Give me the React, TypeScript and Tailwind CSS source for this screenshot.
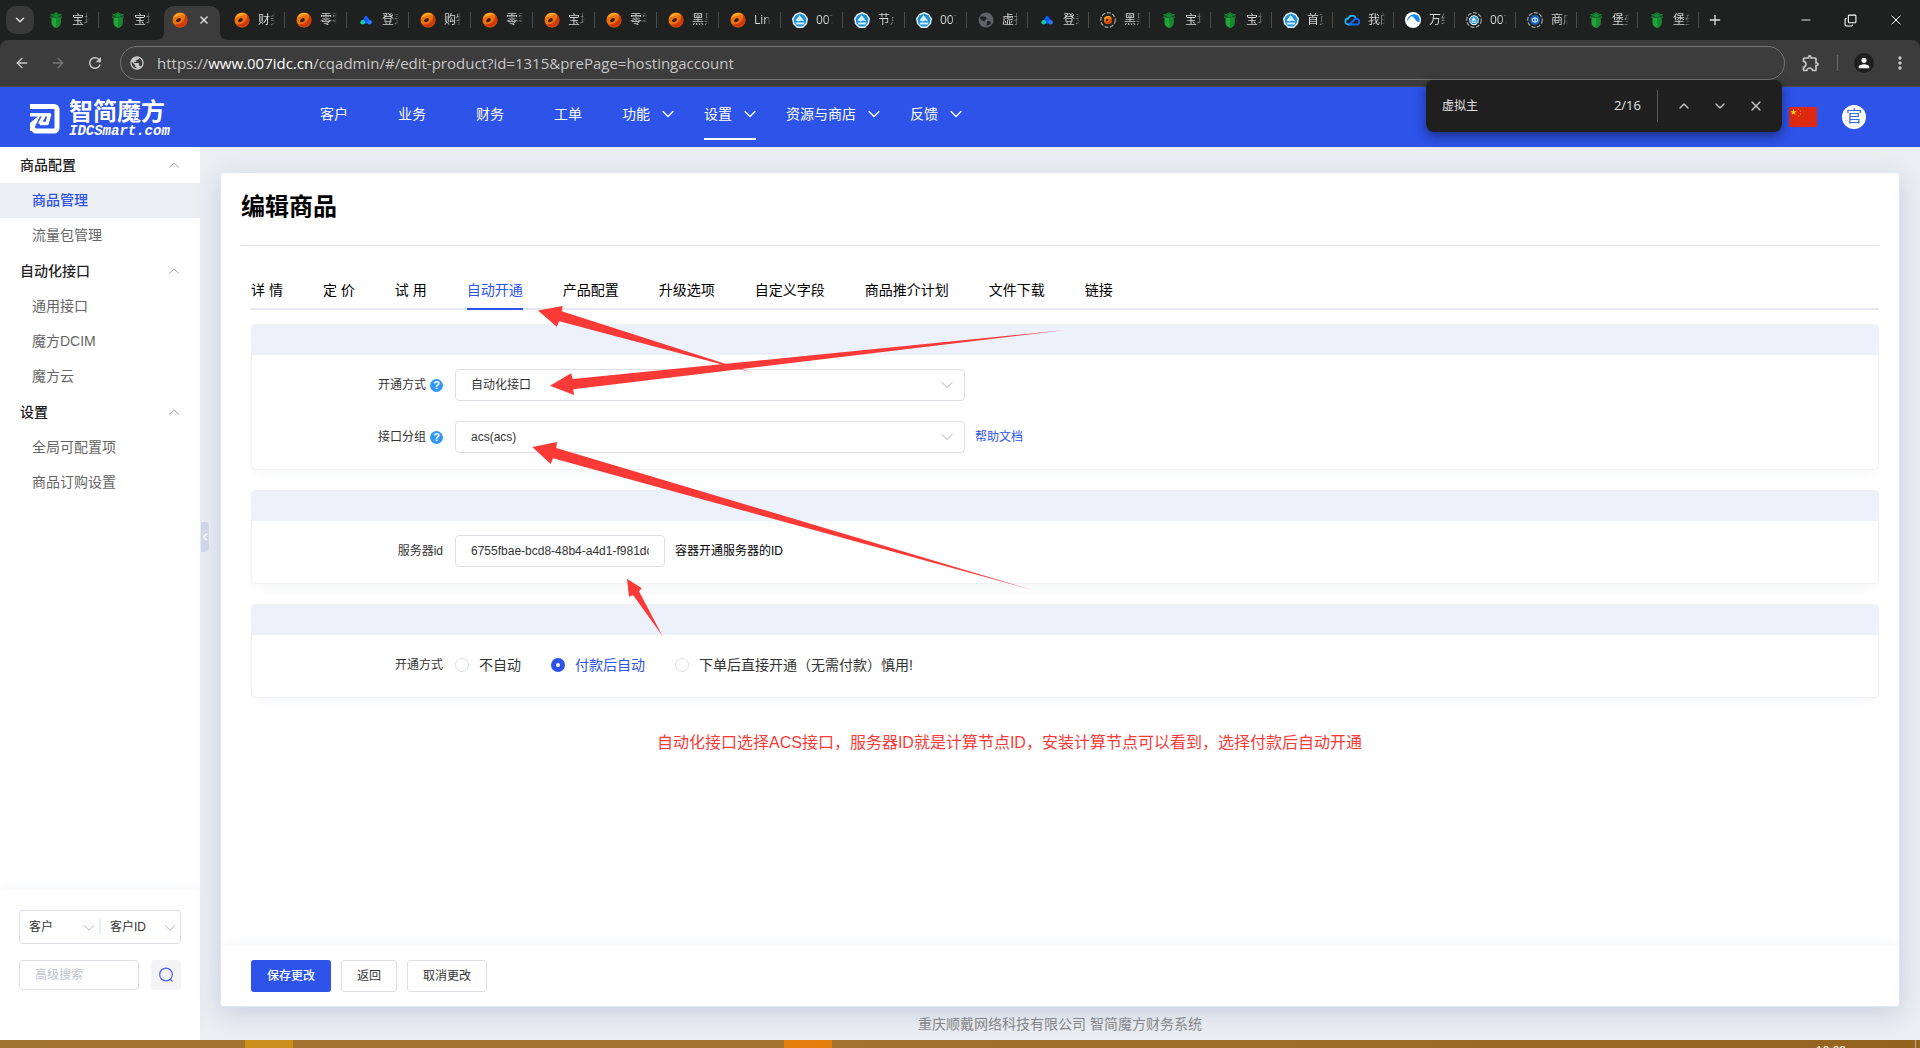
import { useState } from "react";
import type { ReactNode } from "react";
import { ArrowLeft, ArrowRight, ChevronDown, ChevronLeft, ChevronUp, Copy, Minus, Plus, X } from "lucide-react";
import { MdMoreVert, MdOutlineExtension, MdPerson, MdPublic, MdRefresh } from "react-icons/md";

type IconName = "bt" | "orange" | "peaks" | "hex" | "globe" | "ringOrange" | "cloud" | "wave" | "ringHex" | "ringBlue";

const browserTabs: { icon: IconName; label: string; active?: boolean }[] = [
  { icon: "bt", label: "宝塔" },
  { icon: "bt", label: "宝塔" },
  { icon: "orange", label: "", active: true },
  { icon: "orange", label: "财务" },
  { icon: "orange", label: "零零" },
  { icon: "peaks", label: "登录" },
  { icon: "orange", label: "购物" },
  { icon: "orange", label: "零零" },
  { icon: "orange", label: "宝塔" },
  { icon: "orange", label: "零零" },
  { icon: "orange", label: "黑黑" },
  { icon: "orange", label: "Linux" },
  { icon: "hex", label: "007" },
  { icon: "hex", label: "节点" },
  { icon: "hex", label: "007" },
  { icon: "globe", label: "虚拟" },
  { icon: "peaks", label: "登录" },
  { icon: "ringOrange", label: "黑黑" },
  { icon: "bt", label: "宝塔" },
  { icon: "bt", label: "宝塔" },
  { icon: "hex", label: "首页" },
  { icon: "cloud", label: "我的" },
  { icon: "wave", label: "万维" },
  { icon: "ringHex", label: "007" },
  { icon: "ringBlue", label: "商店" },
  { icon: "bt", label: "堡垒" },
  { icon: "bt", label: "堡垒" },
];

const navItems = [
  { label: "客户" },
  { label: "业务" },
  { label: "财务" },
  { label: "工单" },
  { label: "功能", menu: true },
  { label: "设置", menu: true, active: true },
  { label: "资源与商店", menu: true },
  { label: "反馈", menu: true },
];

const sideGroups = [
  { title: "商品配置", items: ["商品管理", "流量包管理"] },
  { title: "自动化接口", items: ["通用接口", "魔方DCIM", "魔方云"] },
  { title: "设置", items: ["全局可配置项", "商品订购设置"] },
];

const productTabs = [
  "详 情",
  "定 价",
  "试 用",
  "自动开通",
  "产品配置",
  "升级选项",
  "自定义字段",
  "商品推介计划",
  "文件下载",
  "链接",
];

const openModes = ["不自动", "付款后自动", "下单后直接开通（无需付款）慎用!"];

function OrangeMark() {
  return (
    <>
      <ellipse cx="8" cy="8" rx="7.5" ry="7.5" fill="#ee720c" />
      <path d="M2 12.500C5 16 12 16 14.600 11.500C16 8 15 4 13 2.500C14 8 9 13 2 12.500z" fill="#d03a0b" />
      <path d="M1 6C2.500 1 9 -0.500 13 2.500C9.500 2.500 3 5 1 6z" fill="#fda326" />
      <ellipse cx="6.500" cy="8.200" rx="2.600" ry="1.700" fill="#3a1a10" transform="rotate(-35 6.500 8.200)" />
    </>
  );
}

function HexMark() {
  return (
    <>
      <path d="M8 0L13 2L16 6.500L15 12L11 16H5L1 12L0 6.500L3 2z" fill="#e9f6fd" />
      <path d="M8 1.500L12.500 3.500L14.500 7L13.500 11.500L10.500 14.500H5.500L2.500 11.500L1.500 7L3.500 3.500z" fill="#1b8fd8" />
      <path d="M3.500 8.500L7.500 3L9.500 5.500L12.500 9.500L9 8.500L7 9.500z" fill="#d7effb" />
      <path d="M3.500 10.500H12.500L11.500 12.500H4.500z" fill="#d7effb" />
    </>
  );
}

function Favicon({ name }: { name: IconName }) {
  const art: Record<IconName, ReactNode> = {
    bt: (
      <>
        <path d="M3.500 6H12.500V11C12.500 13.500 10.500 15 8 16C5.500 15 3.500 13.500 3.500 11z" fill="#20a53a" />
        <path d="M8 6H12.500V11C12.500 13.500 10.500 15 8 16z" fill="#178a30" />
        <path d="M8 0V5M2.500 2.500L8 4L13.500 2.500M2 5.200H14M5.500 1.200L8 3L10.500 1.200" stroke="#168a31" strokeWidth="1.300" fill="none" />
      </>
    ),
    orange: <OrangeMark />,
    peaks: (
      <>
        <path d="M6 8.500L8 5L10.500 8.500L8 10.500z" fill="#0f5bff" stroke="#0f5bff" strokeWidth="2.500" strokeLinejoin="round" />
        <circle cx="4.700" cy="10.200" r="2.300" fill="#12cfa2" />
        <circle cx="11.500" cy="10.200" r="2.300" fill="#2a7bff" />
      </>
    ),
    hex: <HexMark />,
    globe: (
      <>
        <circle cx="8" cy="8" r="7.500" fill="#5f6368" />
        <path d="M3 4C5 5 8 4 8.500 6C9 8 6 7.500 6.500 9.500C5 9 2.500 8 2 6zM9 9.500C11 8.500 13 9.500 13 11C12 13 10 13.500 8.500 13.500C8 12 10 11 9 9.500z" fill="#202124" />
      </>
    ),
    ringOrange: (
      <>
        <circle cx="8" cy="8" r="7.300" fill="none" stroke="#a3a3a3" strokeWidth="1.200" strokeDasharray="4 1.500" />
        <svg x="3.500" y="3.500" width="9" height="9" viewBox="0 0 16 16">
          <OrangeMark />
        </svg>
      </>
    ),
    cloud: (
      <>
        <path d="M6 12.500H4.500A3 3 0 0 1 4.300 6.500A4 4 0 0 1 11.800 6" fill="none" stroke="#13b7f0" strokeWidth="1.800" />
        <path d="M5.500 12.500L10.500 7.500A2.900 2.900 0 1 1 12 12.500H5.500" fill="none" stroke="#0a6cff" strokeWidth="1.800" />
      </>
    ),
    wave: (
      <>
        <circle cx="8" cy="8" r="8" fill="#fff" />
        <path d="M2 9C3.500 8.500 5 3 7.500 4.500C10 6 11 10.500 14.500 10A7 7 0 0 0 13.500 4A7 7 0 0 0 2 9z" fill="#1687f5" />
      </>
    ),
    ringHex: (
      <>
        <circle cx="8" cy="8" r="7.300" fill="none" stroke="#a3a3a3" strokeWidth="1.200" strokeDasharray="4 1.500" />
        <svg x="3" y="3" width="10" height="10" viewBox="0 0 16 16">
          <HexMark />
        </svg>
      </>
    ),
    ringBlue: (
      <>
        <circle cx="8" cy="8" r="7.300" fill="none" stroke="#a3a3a3" strokeWidth="1.200" strokeDasharray="4 1.500" />
        <circle cx="8" cy="8" r="5" fill="#1766c2" />
        <path d="M5.500 6.500H10.500V9.500H5.500zM8 5V11" stroke="#d6e6fa" fill="none" />
      </>
    ),
  };
  return (
    <svg viewBox="0 0 16 16" className="size-4 shrink-0">
      {art[name]}
    </svg>
  );
}

function TabStrip() {
  return (
    <div className="flex h-10 items-stretch bg-[#1f2120] pl-1.5 text-[#dedede]">
      <button aria-label="搜索标签页" className="mt-1.5 mr-[3px] flex size-7 items-center justify-center rounded-[10px] bg-[#3a3a3a]">
        <ChevronDown size={14} strokeWidth={2.5} />
      </button>
      {browserTabs.map((tab, i) => {
        const width = i < 15 ? "w-[62px]" : "w-[61px]";
        if (tab.active) {
          return (
            <div key={i} className={`flex items-end px-[3px] ${width}`}>
              <div className="relative flex h-[34px] w-full items-center justify-between rounded-t-[10px] bg-[#3c3c3c] pr-2.5 pb-1.5 pl-2">
                <svg viewBox="0 0 8 8" className="absolute bottom-0 -left-2 size-2">
                  <path d="M8 0V8H0C5 8 8 5 8 0z" fill="#3c3c3c" />
                </svg>
                <svg viewBox="0 0 8 8" className="absolute -right-2 bottom-0 size-2">
                  <path d="M0 0V8H8C3 8 0 5 0 0z" fill="#3c3c3c" />
                </svg>
                <Favicon name={tab.icon} />
                <button aria-label="关闭">
                  <X size={12} strokeWidth={3} />
                </button>
              </div>
            </div>
          );
        }
        return (
          <div key={i} className={`flex items-center pl-[11px] ${width}`}>
            <Favicon name={tab.icon} />
            <span className="ml-2 w-[17px] overflow-hidden bg-gradient-to-r from-[#dedede] from-65% to-transparent bg-clip-text text-xs whitespace-nowrap text-transparent">
              {tab.label}
            </span>
            {i !== 1 && <span className="ml-auto h-4 w-px bg-[#4a4b4b]" />}
          </div>
        );
      })}
      <button aria-label="新标签页" className="ml-2">
        <Plus size={16} />
      </button>
      <div className="ml-auto flex items-center gap-[31px] pr-4 text-white">
        <button aria-label="最小化">
          <Minus size={14} strokeWidth={1.5} />
        </button>
        <button aria-label="还原">
          <Copy size={13} strokeWidth={2} className="-scale-x-100 -rotate-180 [&>rect]:[rx:1px]" />
        </button>
        <button aria-label="关闭窗口">
          <X size={16} strokeWidth={1.5} />
        </button>
      </div>
    </div>
  );
}

function Toolbar() {
  return (
    <div className="bg-[#1f2120]">
      <div className="flex h-[47px] items-center rounded-t-lg border-b border-[#4a4a4a] bg-[#3c3c3c] pr-2.5 pl-3.5 text-[#c7c7c7]">
        <button aria-label="后退" className="mr-5">
          <ArrowLeft size={16} />
        </button>
        <button aria-label="前进" className="mr-5 text-[#757575]">
          <ArrowRight size={16} />
        </button>
        <button aria-label="刷新">
          <MdRefresh size={18} />
        </button>
        <div className="ml-4 flex h-[34px] flex-1 items-center rounded-full border border-[#757575] px-2">
          <MdPublic size={16} />
          <span className="ml-3 text-[15px] text-[#c7c7c7]">
            https://<span className="text-white">www.007idc.cn</span>/cqadmin/#/edit-product?id=1315&amp;prePage=hostingaccount
          </span>
        </div>
        <button aria-label="扩展程序" className="ml-4">
          <MdOutlineExtension size={20} />
        </button>
        <span className="mx-4 h-4 w-px bg-[#6a6a6a]" />
        <button aria-label="用户" className="flex size-5 items-center justify-center rounded-full bg-[#1f1f1f] text-white">
          <MdPerson size={16} />
        </button>
        <button aria-label="菜单" className="ml-4">
          <MdMoreVert size={20} />
        </button>
      </div>
    </div>
  );
}

function FindBar() {
  const [query, setQuery] = useState("虚拟主");
  return (
    <div className="absolute top-20 right-[138px] z-20 flex h-[52px] w-[356px] items-center rounded-lg bg-[#1f1f1f] pr-[18px] pl-4 text-xs text-[#e3e3e3] shadow-[0_4px_12px_rgba(0,0,0,0.45)]">
      <input
        aria-label="在网页中查找"
        value={query}
        onChange={(e) => setQuery(e.target.value)}
        className="min-w-0 flex-1 bg-transparent outline-none"
      />
      <span className="text-[13px]">2/16</span>
      <span className="mr-[18px] ml-4 h-8 w-px bg-[#5a5a5a]" />
      <div className="flex gap-5 text-[#c7c7c7]">
        <button aria-label="上一个">
          <ChevronUp size={16} />
        </button>
        <button aria-label="下一个">
          <ChevronDown size={16} />
        </button>
        <button aria-label="关闭查找">
          <X size={16} />
        </button>
      </div>
    </div>
  );
}

function Logo() {
  return (
    <a href="#home" className="flex w-[295px] shrink-0 items-center pt-1 pl-[30px]" aria-label="智简魔方">
      <svg viewBox="0 0 30 30" className="size-[30px]" fill="none" stroke="#fff" strokeLinejoin="round">
        <path d="M0 2.500H24A3 3 0 0 1 27 5.500V24A3 3 0 0 1 24 27H5L2.500 24.500V22" strokeWidth="5" />
        <path d="M0 10.800H19.500L17 19.500H10" strokeWidth="3.600" />
        <path d="M14 12L9.500 20" strokeWidth="3.500" />
        <path d="M8.500 12L0 19V27H3L10 12z" fill="#fff" stroke="none" />
      </svg>
      <span className="ml-[9px] flex flex-col text-white">
        <span className="text-2xl leading-[22px] font-bold">智简魔方</span>
        <span className="mt-0.5 font-['Liberation_Mono',monospace] text-sm leading-3 font-bold italic">IDCSmart.com</span>
      </span>
    </a>
  );
}

function Header() {
  return (
    <header className="flex h-[60px] shrink-0 bg-[#2d53e9] text-sm text-white">
      <Logo />
      <nav className="flex h-[53px]">
        {navItems.map((item) => (
          <a key={item.label} href={`#${item.label}`} className={item.menu ? "px-[15px]" : "px-[25px]"}>
            <span
              className={`flex h-full items-center gap-3 border-b-2 pt-0.5 ${item.active ? "border-white" : "border-transparent"}`}
            >
              {item.label}
              {item.menu && <ChevronDown size={20} strokeWidth={1.5} className="-mx-1" />}
            </span>
          </a>
        ))}
      </nav>
      <div className="ml-auto flex items-center gap-[25px] pr-[54px]">
        <button aria-label="语言">
          <svg viewBox="0 0 28 20" className="h-5 w-7">
            <path d="M0 0H28V20H0z" fill="#de2910" />
            <path d="M4.500 2L5.300 4.300H7.700L5.800 5.700L6.500 8L4.500 6.600L2.500 8L3.200 5.700L1.300 4.300H3.700z" fill="#ffde00" />
            <path d="M9 1.500H10V2.500H9zM11 3.500H12V4.500H11zM11 6.500H12V7.500H11zM9 8.500H10V9.500H9z" fill="#ffb000" />
          </svg>
        </button>
        <button className="flex size-6 items-center justify-center rounded-full bg-white text-base text-[#2d6fe0]">官</button>
      </div>
    </header>
  );
}

function SmallSelect({ label, options }: { label: string; options: string[] }) {
  return (
    <div className="relative flex-1">
      <select aria-label={label} className="h-8 w-full appearance-none bg-transparent pl-[9px] outline-none">
        {options.map((o) => (
          <option key={o}>{o}</option>
        ))}
      </select>
      <ChevronDown size={18} strokeWidth={1.2} className="pointer-events-none absolute top-2 right-px text-[#a8adb8]" />
    </div>
  );
}

function Sidebar({ current, onSelect }: { current: string; onSelect: (name: string) => void }) {
  return (
    <aside className="relative flex w-[200px] shrink-0 flex-col bg-white text-sm">
      {sideGroups.map((group) => (
        <section key={group.title}>
          <button className="flex h-9 w-full items-center justify-between pr-[17px] pl-5 font-medium text-[#222]">
            {group.title}
            <ChevronUp size={18} strokeWidth={1.2} className="text-[#909399]" />
          </button>
          {group.items.map((item) => (
            <a
              key={item}
              href={`#${item}`}
              onClick={() => onSelect(item)}
              className={`flex h-[35px] items-center pb-0.5 pl-8 ${
                current === item ? "bg-[#ebeef3] font-medium text-[#2d53e9]" : "text-[#666]"
              }`}
            >
              {item}
            </a>
          ))}
        </section>
      ))}

      <div className="mt-auto flex h-[150px] flex-col gap-4 pt-5 pr-[19px] pl-[19px] text-xs text-[#333] shadow-[0_-6px_12px_-4px_rgba(60,80,160,0.06)]">
        <div className="flex h-[34px] items-center rounded border border-[#dcdfe6]">
          <SmallSelect label="搜索类型" options={["客户"]} />
          <span className="h-4 w-0.5 bg-[#ebeef5]" />
          <SmallSelect label="搜索字段" options={["客户ID"]} />
        </div>
        <div className="flex justify-between">
          <input
            aria-label="高级搜索"
            placeholder="高级搜索"
            className="h-[30px] w-[120px] rounded border border-[#dcdfe6] px-[15px] outline-none placeholder:text-[#c0c4cc]"
          />
          <button aria-label="搜索" className="flex size-[30px] items-center justify-center rounded bg-[#f4f4f7] text-[#4a5cf0]">
            <svg viewBox="0 0 16 16" className="size-4" fill="none" stroke="currentColor" strokeWidth="1.200">
              <circle cx="8" cy="7.500" r="6.300" />
              <path d="M12 12L14.500 14.500" />
            </svg>
          </button>
        </div>
      </div>

      <button
        aria-label="收起菜单"
        className="absolute top-[375px] -right-[9px] z-10 flex h-[30px] w-2 items-center justify-center rounded-r bg-[#cfd6e8] text-white"
      >
        <ChevronLeft size={12} strokeWidth={2.5} className="shrink-0" />
      </button>
    </aside>
  );
}

function Panel({ children }: { children: ReactNode }) {
  return (
    <section className="mb-5 rounded border border-[#f0f1f4] text-xs text-[#333] shadow-[0_8px_12px_-6px_rgba(60,80,120,0.06)]">
      <div className="h-[30px] rounded-t bg-[#edf1fc]" />
      <div className="flex flex-col gap-5 pt-[14px] pb-4">{children}</div>
    </section>
  );
}

function FieldLabel({ htmlFor, children, help }: { htmlFor?: string; children: ReactNode; help?: boolean }) {
  return (
    <label htmlFor={htmlFor} className="flex w-[191px] shrink-0 items-center justify-end gap-1">
      {children}
      {help && (
        <span className="flex size-[13px] items-center justify-center rounded-full bg-[#3296fa] text-[11px] leading-3 font-bold text-white">
          ?
        </span>
      )}
    </label>
  );
}

function Select({ id, options }: { id: string; options: string[] }) {
  return (
    <div className="relative ml-3 w-[510px]">
      <select id={id} className="h-8 w-full appearance-none rounded border border-[#dcdfe6] bg-white px-[15px] outline-none">
        {options.map((o) => (
          <option key={o}>{o}</option>
        ))}
      </select>
      <ChevronDown size={20} strokeWidth={1.2} className="pointer-events-none absolute top-1.5 right-2 text-[#a8adb8]" />
    </div>
  );
}

// Hand-drawn style notes laid over the form
function Annotations() {
  return (
    <div className="pointer-events-none absolute top-0 left-0 z-10">
      <svg width="860" height="470" viewBox="221 173 860 470" fill="#fb3a38">
        <path d="M538 310.500L562.700 306L561.700 311.300L754 373L559.300 321.300L556.700 326.700z" />
        <path d="M550 385.700L571 373.300L572.700 379L1066 330L573.300 389.300L574 395z" />
        <path d="M532.300 447L557 442L556.300 448L1034 590.500L553 458.300L550.700 464z" />
        <path d="M627 578.700L641.700 588.300L639 591.300L662.500 636L633 595L629 596.700z" />
      </svg>
      <p className="mt-[88px] ml-[436px] text-base whitespace-nowrap text-[#fb3a38]">
        自动化接口选择ACS接口，服务器ID就是计算节点ID，安装计算节点可以看到，选择付款后自动开通
      </p>
    </div>
  );
}

function EditProduct() {
  const [tab, setTab] = useState("自动开通");
  const [mode, setMode] = useState("付款后自动");
  return (
    <div className="relative mx-5 mt-[25px] flex flex-1 flex-col rounded border border-[#e2e8f3] bg-white shadow-[0_6px_24px_rgba(60,85,140,0.2)]">
      <div className="flex-1 px-5">
        <h1 className="border-b border-[#dcdfe6] pt-4 pb-5 text-2xl leading-9 font-bold text-black">编辑商品</h1>

        <div className="pl-2.5">
          <div role="tablist" className="mt-6 mb-[14px] flex h-10 gap-10 border-b-2 border-[#e4e7ed] text-sm text-black">
            {productTabs.map((name) => (
              <button
                key={name}
                role="tab"
                aria-selected={tab === name}
                onClick={() => setTab(name)}
                className={`-mb-0.5 border-b-2 pt-0.5 ${
                  tab === name ? "border-[#2d53e9] text-[#2d53e9]" : "border-transparent"
                }`}
              >
                {name}
              </button>
            ))}
          </div>

          <Panel>
            <div className="flex items-center">
              <FieldLabel htmlFor="openType" help>
                开通方式
              </FieldLabel>
              <Select id="openType" options={["自动化接口"]} />
            </div>
            <div className="flex items-center">
              <FieldLabel htmlFor="apiGroup" help>
                接口分组
              </FieldLabel>
              <Select id="apiGroup" options={["acs(acs)"]} />
              <a href="#help" className="ml-2.5 text-[#2d53e9]">
                帮助文档
              </a>
            </div>
          </Panel>

          <Panel>
            <div className="flex items-center">
              <FieldLabel htmlFor="serverId">服务器id</FieldLabel>
              <input
                id="serverId"
                defaultValue="6755fbae-bcd8-48b4-a4d1-f981dc"
                className="ml-3 h-8 w-[210px] rounded border border-[#dcdfe6] px-[15px] outline-none"
              />
              <span className="ml-2.5 text-black">容器开通服务器的ID</span>
            </div>
          </Panel>

          <Panel>
            <div className="flex h-8 items-center">
              <FieldLabel>开通方式</FieldLabel>
              <div role="radiogroup" aria-label="开通方式" className="ml-3 flex gap-[30px] text-sm">
                {openModes.map((name) => (
                  <label
                    key={name}
                    className={`flex items-center gap-2.5 ${mode === name ? "text-[#2d53e9]" : "text-[#333]"}`}
                  >
                    <input
                      type="radio"
                      name="mode"
                      checked={mode === name}
                      onChange={() => setMode(name)}
                      className="size-[14px] appearance-none rounded-full border border-[#dcdfe6] bg-white checked:border-[5px] checked:border-[#2d53e9]"
                    />
                    {name}
                  </label>
                ))}
              </div>
            </div>
          </Panel>
        </div>
      </div>

      <div className="flex gap-2.5 rounded-b bg-white py-[14px] pl-[30px] text-xs shadow-[0_-8px_16px_-6px_rgba(60,80,160,0.06)]">
        <button className="h-8 rounded-[3px] bg-[#2d53e9] px-4 font-medium text-white">保存更改</button>
        <button className="h-8 rounded-[3px] border border-[#dcdfe6] px-[15px] text-[#333]">返回</button>
        <button className="h-8 rounded-[3px] border border-[#dcdfe6] px-[15px] text-[#333]">取消更改</button>
      </div>

      <Annotations />
    </div>
  );
}

function Taskbar() {
  return (
    <div className="flex h-2 shrink-0 overflow-hidden bg-linear-to-r from-[#a1742e] via-[#a1722d] to-[#94631f]">
      <span className="ml-[245px] w-12 bg-[#cb901c]" />
      <span className="ml-[491px] w-12 bg-[#e67e0e]" />
      <span className="mt-[3px] ml-auto text-xs leading-4 text-white">10:29</span>
      <span className="mr-1 ml-[69px] w-px bg-[#c4a67a]" />
    </div>
  );
}

export default function App() {
  const [current, setCurrent] = useState("商品管理");
  return (
    <div className="relative flex h-screen flex-col overflow-hidden bg-[#ebeef3] font-['Liberation_Sans','Noto_Sans_CJK_SC',sans-serif]">
      <div className="shrink-0 font-['Open_Sans','Noto_Sans_CJK_SC',sans-serif]">
        <TabStrip />
        <Toolbar />
        <FindBar />
      </div>
      <Header />
      <div className="flex min-h-0 flex-1">
        <Sidebar current={current} onSelect={setCurrent} />
        <main className="flex min-w-0 flex-1 flex-col">
          <EditProduct />
          <footer className="flex h-[33px] shrink-0 items-center justify-center text-sm text-[#888]">
            重庆顺戴网络科技有限公司 智简魔方财务系统
          </footer>
        </main>
      </div>
      <Taskbar />
    </div>
  );
}
